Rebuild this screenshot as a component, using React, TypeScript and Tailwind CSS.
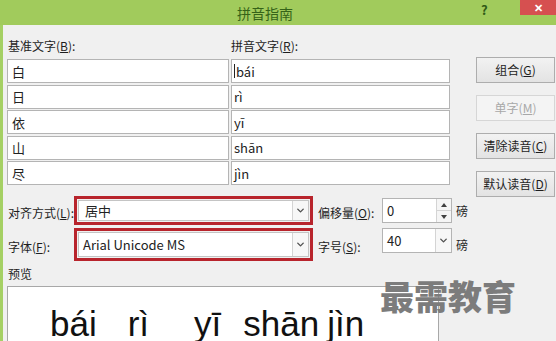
import { ChevronDown } from 'lucide-react'

const rows = [
  { base: '白', pinyin: 'bái' },
  { base: '日', pinyin: 'rì' },
  { base: '依', pinyin: 'yī' },
  { base: '山', pinyin: 'shān' },
  { base: '尽', pinyin: 'jìn' },
]

const buttons = [
  { label: '组合', key: 'G', disabled: false },
  { label: '单字', key: 'M', disabled: true },
  { label: '清除读音', key: 'C', disabled: false },
  { label: '默认读音', key: 'D', disabled: false },
]

const Label = ({ text, k }: { text: string; k: string }) => (
  <span className="text-[12px] text-[#1e1e1e] whitespace-nowrap">
    {text}(<u>{k}</u>):
  </span>
)

const DropButton = () => (
  <div className="w-[16px] h-full flex items-center justify-center border-l border-[#d4d4d4] bg-[#f7f7f7]">
    <ChevronDown size={11} strokeWidth={3} className="text-[#505050]" />
  </div>
)

const App = () => {
  return (
    <div className="w-[556px] h-[341px] overflow-hidden relative bg-[#f0f0f0] font-['Noto_Sans_CJK_SC',sans-serif] leading-none">
      {/* Title bar */}
      <div className="h-[25px] bg-[#a1cb5c] flex items-center relative">
        <div className="flex-1 flex justify-center pr-[26px] text-[14px] text-[#356318]">拼音指南</div>
        <span className="absolute left-[481px] top-[3px] text-[13px] font-bold text-[#2f5a17]">?</span>
        <div className="absolute right-0 top-0 w-[36px] h-[15px] bg-[#d65050] flex items-center justify-center text-white text-[11px] font-bold">
          ✕
        </div>
      </div>

      {/* Body */}
      <div className="border-l-[3px] border-[#a5d064] h-[316px] relative">
        <div className="flex items-start">
          {/* Reading table */}
          <div className="pl-[4px]">
            <div className="flex pt-[11px]">
              <div className="w-[224px] pl-[1px]"><Label text="基准文字" k="B" /></div>
              <div><Label text="拼音文字" k="R" /></div>
            </div>
            <div className="mt-[7px] grid grid-cols-[222px_219px] gap-x-[2px] gap-y-[1.5px]">
              {rows.map(r => (
                <div key={r.base} className="contents">
                  <div className="h-[24px] bg-white border border-[#b4b4b4] flex items-center pl-[4px] text-[13px] text-[#222]">
                    {r.base}
                  </div>
                  <div className="h-[24px] bg-white border border-[#b4b4b4] flex items-center pl-[2px] text-[13px] text-[#222]">
                    {r.pinyin === 'bái' && <span className="w-px h-[14px] bg-[#222] mr-[1px]" />}
                    {r.pinyin}
                  </div>
                </div>
              ))}
            </div>
          </div>

          {/* Buttons */}
          <div className="ml-[26px] mt-[32px] -mb-[30px] w-[79px] flex flex-col gap-[12px]">
            {buttons.map(b => (
              <div
                key={b.key}
                className={`h-[26px] flex items-center justify-center text-[12px] border ${
                  b.disabled
                    ? 'border-[#d6d6d6] bg-[#f4f4f4] text-[#a8a8a8]'
                    : 'border-[#adadad] bg-gradient-to-b from-[#f2f2f2] to-[#e3e3e3] text-[#1e1e1e]'
                }`}
              >
                {b.label}(<u>{b.key}</u>)
              </div>
            ))}
          </div>
        </div>

        {/* Alignment / offset */}
        <div className="flex items-center mt-[11px] pl-[5px] h-[29px]">
          <div className="w-[66px]"><Label text="对齐方式" k="L" /></div>
          <div className="w-[239px] h-[29px] border-[3px] border-[#b8242c] p-[1px] flex">
            <div className="flex-1 bg-white border border-[#c4c4c4] flex items-center">
              <span className="flex-1 pl-[6px] text-[13px] text-[#222]">居中</span>
              <DropButton />
            </div>
          </div>
          <div className="ml-[5px] w-[64px]"><Label text="偏移量" k="O" /></div>
          <div className="w-[70px] h-[25px] bg-white border border-[#b4b4b4] flex">
            <span className="flex-1 flex items-center pl-[4px] text-[13px] text-[#222]">0</span>
            <div className="w-[15px] border-l border-[#d4d4d4] flex flex-col">
              <div className="flex-1 flex items-center justify-center border-b border-[#d4d4d4] bg-[#f5f5f5]">
                <div className="w-0 h-0 border-l-[3px] border-r-[3px] border-b-[4px] border-l-transparent border-r-transparent border-b-[#404040]" />
              </div>
              <div className="flex-1 flex items-center justify-center bg-[#f5f5f5]">
                <div className="w-0 h-0 border-l-[3px] border-r-[3px] border-t-[4px] border-l-transparent border-r-transparent border-t-[#404040]" />
              </div>
            </div>
          </div>
          <span className="ml-[4px] text-[12px] text-[#1e1e1e]">磅</span>
        </div>

        {/* Font / size */}
        <div className="flex items-center mt-[3px] pl-[5px] h-[33px]">
          <div className="w-[66px]"><Label text="字体" k="F" /></div>
          <div className="w-[239px] h-[33px] border-[3px] border-[#b8242c] p-[1px] flex">
            <div className="flex-1 bg-white border border-[#c4c4c4] flex items-center">
              <span className="flex-1 pl-[4px] text-[13px] text-[#222]">Arial Unicode MS</span>
              <DropButton />
            </div>
          </div>
          <div className="ml-[5px] w-[64px]"><Label text="字号" k="S" /></div>
          <div className="w-[70px] h-[25px] self-start bg-white border border-[#b4b4b4] flex">
            <span className="flex-1 flex items-center pl-[4px] text-[13px] text-[#222]">40</span>
            <DropButton />
          </div>
          <span className="ml-[4px] text-[12px] text-[#1e1e1e]">磅</span>
        </div>

        {/* Preview */}
        <div className="mt-[7px] pl-[5px] text-[12px] text-[#1e1e1e]">预览</div>
        <div className="mt-[6px] ml-[4px] w-[432px] h-[70px] bg-white border border-[#a8a8a8] pl-[42px] pt-[19px] font-['Liberation_Sans',sans-serif] text-[35px] leading-[35px] text-[#111] whitespace-nowrap">
          <span>bái</span>
          <span className="ml-[31px]">rì</span>
          <span className="ml-[45px]">yī</span>
          <span className="ml-[22px]">shān</span>
          <span className="ml-[8px]">jìn</span>
        </div>

        {/* Watermark */}
        <div className="absolute left-[377px] top-[254px] text-[34px] leading-[34px] font-black text-[#7c7c7c]">
          最需教育
        </div>
      </div>
    </div>
  )
}

export default App
